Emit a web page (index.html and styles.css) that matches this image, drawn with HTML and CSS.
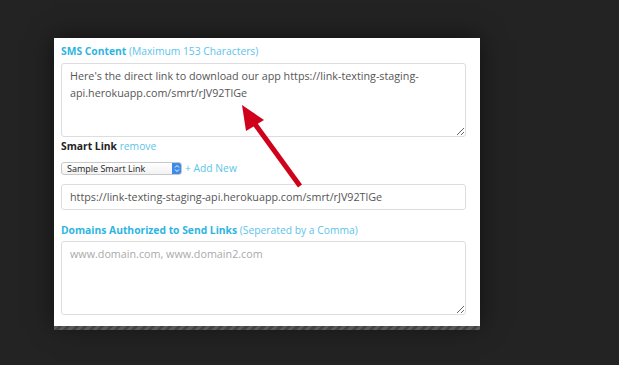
FILE: index.html
```html
<!DOCTYPE html>
<html>
<head>
<meta charset="utf-8">
<link rel="stylesheet" href="styles.css">
</head>
<body>
<div class="stage">
  <div class="panel">
    <div class="label label-first"><b>SMS Content</b> <span class="hint">(Maximum 153 Characters)</span></div>
    <textarea class="area" readonly>Here's the direct link to download our app https://link-texting-staging-
api.herokuapp.com/smrt/rJV92TlGe</textarea>
    <div class="label label-dark"><b>Smart Link</b> <span class="link">remove</span></div>
    <div class="select-row">
      <div class="select">
        <span class="select-text">Sample Smart Link</span>
        <span class="select-btn">
          <svg width="6" height="9" viewBox="0 0 6 9"><path d="M1 3.5 L3 1.5 L5 3.5 M1 5.5 L3 7.5 L5 5.5" fill="none" stroke="#fff" stroke-width="1"/></svg>
        </span>
      </div>
      <span class="add-new">+ Add New</span>
    </div>
    <div class="input">https://link-texting-staging-api.herokuapp.com/smrt/rJV92TlGe</div>
    <div class="label label-domains"><b>Domains Authorized to Send Links</b> <span class="hint">(Seperated by a Comma)</span></div>
    <textarea class="area" readonly placeholder="www.domain.com, www.domain2.com"></textarea>
  </div>
  <div class="stripe"></div>
  <svg class="arrow" width="619" height="365" viewBox="0 0 619 365">
    <line x1="300" y1="186" x2="252" y2="120" stroke="#d0021b" stroke-width="5" stroke-linecap="butt"/>
    <polygon points="242,105 264,120 246,131" fill="#d0021b"/>
  </svg>
</div>
</body>
</html>
```
FILE: styles.css
```css
html, body {
  margin: 0;
  padding: 0;
}
body {
  width: 619px;
  height: 365px;
  overflow: hidden;
  background: #232323;
  font-family: "Open Sans", "Liberation Sans", sans-serif;
}
.stage {
  padding: 38px 0 0 54px;
}
.panel {
  width: 405px;
  height: 282px;
  background: #fff;
  padding: 6px 14px 0 7px;
  display: flex;
  flex-direction: column;
  box-shadow: 0 0 24px rgba(0,0,0,0.55);
}
.stripe {
  width: 426px;
  height: 4px;
  background: repeating-linear-gradient(135deg, #5a5a5a 0 3px, #444 3px 6px);
}
.label {
  font-size: 10.3px;
  line-height: 14px;
  color: #2fb5e2;
  white-space: nowrap;
}
.label b {
  font-weight: 700;
}
.hint {
  color: #5cc4ea;
}
.label-dark b {
  color: #222;
}
.link {
  color: #5cc4ea;
}
.area {
  display: block;
  box-sizing: border-box;
  width: 405px;
  height: 74px;
  margin: 5px 0 0 0;
  border: 1px solid #ddd;
  border-radius: 3px;
  padding: 4px 8px;
  font-family: inherit;
  font-size: 10.75px;
  line-height: 17px;
  color: #555;
  resize: vertical;
  outline: none;
  overflow: hidden;
}
.area::placeholder {
  color: #aaa;
}
.label-dark {
  margin-top: 2px;
}
.select-row {
  display: flex;
  align-items: center;
  margin-top: 8px;
  height: 14px;
}
.select {
  box-sizing: border-box;
  width: 121px;
  height: 13px;
  border: 1px solid #c8c8c8;
  border-radius: 3px;
  display: flex;
  align-items: center;
  justify-content: space-between;
  background: linear-gradient(#fff, #f2f2f2);
  overflow: hidden;
}
.select-text {
  font-size: 9px;
  color: #222;
  padding-left: 5px;
  line-height: 11px;
}
.select-btn {
  width: 10px;
  height: 13px;
  margin: -1px -1px -1px 0;
  background: #3d8be8;
  border-radius: 0 3px 3px 0;
  display: flex;
  align-items: center;
  justify-content: center;
}
.add-new {
  font-size: 10.3px;
  color: #5cc4ea;
  margin-left: 3px;
}
.input {
  box-sizing: border-box;
  width: 405px;
  height: 26px;
  margin-top: 9px;
  border: 1px solid #ddd;
  border-radius: 3px;
  padding: 0 8px;
  font-size: 10.75px;
  line-height: 24px;
  color: #555;
  white-space: nowrap;
}
.label-domains {
  margin-top: 13px;
}
.label-domains + .area {
  margin-top: 4px;
}
.arrow {
  position: absolute;
  left: 0;
  top: 0;
  pointer-events: none;
}
```
